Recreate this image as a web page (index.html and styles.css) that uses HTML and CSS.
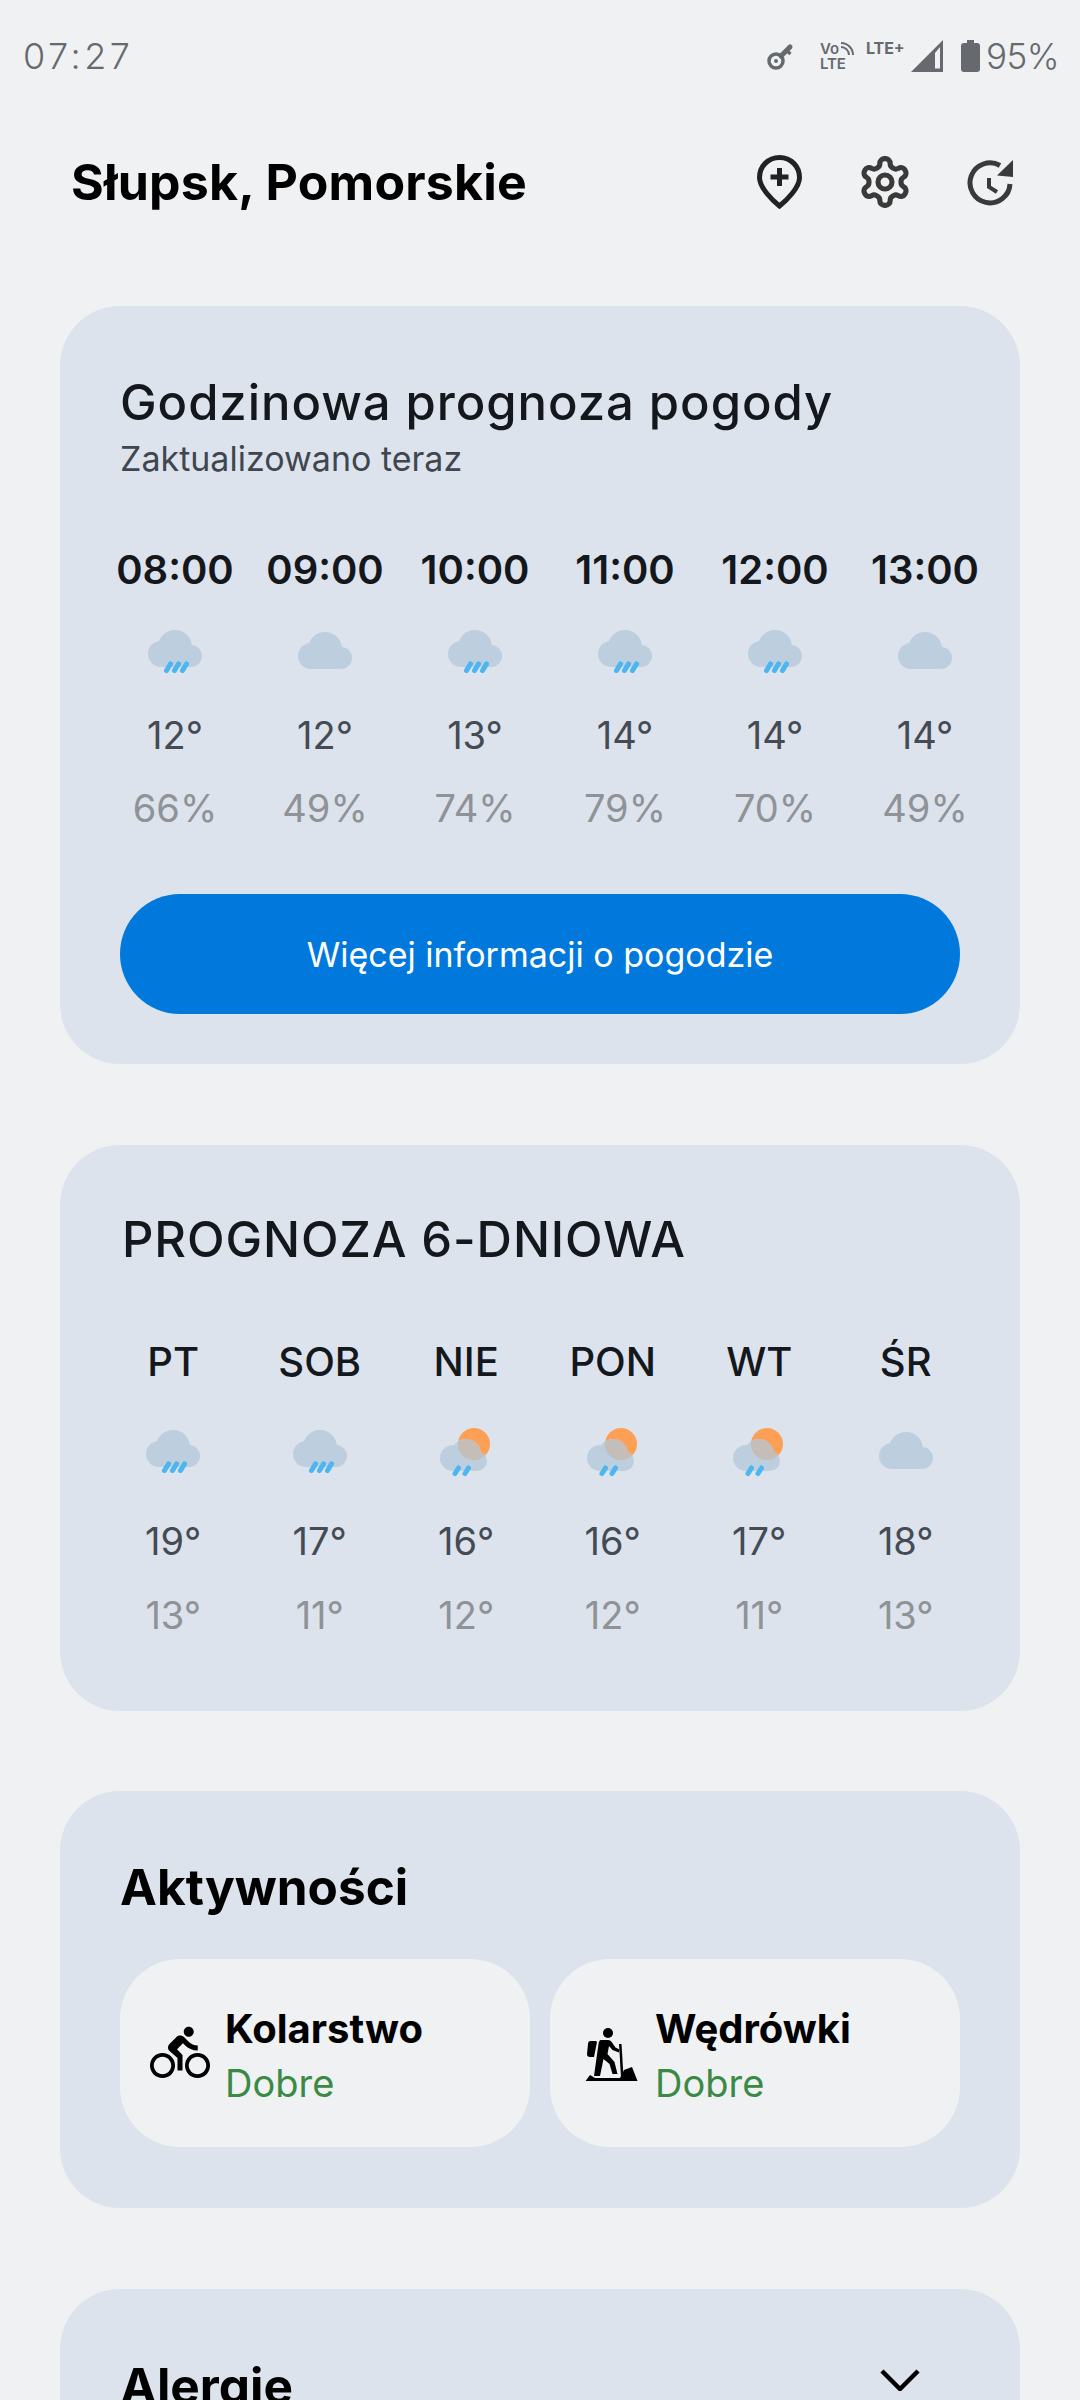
FILE: index.html
```html
<!DOCTYPE html>
<html lang="pl">
<head>
<meta charset="utf-8">
<title>Pogoda</title>
<link rel="stylesheet" href="styles.css">
</head>
<body>
<svg class="defs" width="0" height="0">
  <defs>
    <g id="cloud"><circle cx="27" cy="17" r="17"/><circle cx="13" cy="24" r="13"/><circle cx="43" cy="26" r="11"/><rect x="13" y="20" width="30" height="17"/></g>
    <g id="rain3" class="drops"><path d="M18.500 40.500l4-6.500M26.500 40.500l4-6.500M34.500 40.500l4-6.500"/></g>
    <g id="lobes"><circle cx="27" cy="24" r="15"/><circle cx="14" cy="28" r="13"/><circle cx="38" cy="31" r="10"/><rect x="14" y="24" width="24" height="17"/></g>
    <clipPath id="sunclip"><circle cx="35" cy="14" r="16"/></clipPath>
    <symbol id="i-rain" viewBox="0 0 54 44" overflow="visible"><use href="#cloud" class="cl"/><use href="#rain3"/></symbol>
    <symbol id="i-cloud" viewBox="0 0 54 44" overflow="visible"><use href="#cloud" class="cl" y="2"/></symbol>
    <symbol id="i-sun" viewBox="0 0 54 44" overflow="visible">
      <circle cx="35" cy="14" r="16" class="sun"/>
      <use href="#lobes" class="cl"/>
      <g clip-path="url(#sunclip)"><use href="#lobes" class="ov"/></g>
      <g class="drops"><path d="M16 43.500l3.500-5.500M26 43.500l3.500-5.500"/></g>
    </symbol>
  </defs>
</svg>

<div class="status">
  <span class="clock">07:27</span>
  <div class="status-right">
    <svg class="st-key" viewBox="0 0 28 28"><circle cx="9" cy="19" r="7" class="st-line"/><circle cx="9" cy="19" r="2" class="st-fill"/><path class="st-shaft" d="M14 14L23 5"/><path class="st-line" d="M20 9l3.500 3"/></svg>
    <div class="volte"><span class="vo">Vo<svg class="vo-w" viewBox="0 0 14 14"><path d="M1 5a8 8 0 0 1 8 8M1 1a12 12 0 0 1 12 12" class="st-thin"/></svg></span><span>LTE</span></div>
    <span class="lte">LTE+</span>
    <svg class="st-sig" viewBox="0 0 32 32"><path d="M32 0V32H0Z" class="st-fill"/><path d="M24 13V28.500H29V7Z" class="st-bg"/></svg>
    <svg class="st-bat" viewBox="0 0 19 32"><path d="M6 0h7v3h3a3 3 0 0 1 3 3v23a3 3 0 0 1-3 3H3a3 3 0 0 1-3-3V6a3 3 0 0 1 3-3h3z" class="st-fill"/></svg>
    <span class="pct">95%</span>
  </div>
</div>

<header class="head">
  <h1 class="place">Słupsk, Pomorskie</h1>
  <svg class="h-pin" viewBox="0 0 45 54"><path class="h-line" d="M22.500 2.500C11 2.500 2.500 11.500 2.500 22.500C2.500 32.500 15 45 22.500 51C30 45 42.500 32.500 42.500 22.500C42.500 11.500 34 2.500 22.500 2.500Z"/><path class="h-line" d="M22.500 13v18M13.500 22h18"/></svg>
  <svg class="h-gear" viewBox="0 0 24 24"><path class="h-gear-l" d="M12.220 2h-.44a2 2 0 0 0-2 2v.18a2 2 0 0 1-1 1.730l-.43.250a2 2 0 0 1-2 0l-.15-.08a2 2 0 0 0-2.730.730l-.22.380a2 2 0 0 0 .730 2.730l.15.100a2 2 0 0 1 1 1.720v.510a2 2 0 0 1-1 1.740l-.15.090a2 2 0 0 0-.730 2.730l.22.380a2 2 0 0 0 2.730.730l.15-.08a2 2 0 0 1 2 0l.43.250a2 2 0 0 1 1 1.730V20a2 2 0 0 0 2 2h.44a2 2 0 0 0 2-2v-.18a2 2 0 0 1 1-1.730l.43-.25a2 2 0 0 1 2 0l.15.08a2 2 0 0 0 2.730-.73l.22-.39a2 2 0 0 0-.73-2.730l-.15-.08a2 2 0 0 1-1-1.740v-.5a2 2 0 0 1 1-1.740l.15-.09a2 2 0 0 0 .73-2.730l-.22-.38a2 2 0 0 0-2.730-.73l-.15.08a2 2 0 0 1-2 0l-.43-.25a2 2 0 0 1-1-1.730V4a2 2 0 0 0-2-2z"/><circle class="h-gear-l" cx="12" cy="12" r="3"/></svg>
  <svg class="h-hist" viewBox="0 0 48 48"><path class="h-line2" d="M43 26A20 20 0 1 1 33 7.500"/><path class="h-fill" d="M46 2V19L30 17.500Z"/><path class="h-thin" d="M22 20v9l8 5"/></svg>
</header>

<section class="card card-hours">
  <h2 class="card-title">Godzinowa prognoza pogody</h2>
  <p class="updated">Zaktualizowano teraz</p>
  <div class="hours">
    <div class="col"><span class="time">08:00</span><svg class="wx"><use href="#i-rain"/></svg><span class="temp">12°</span><span class="mute">66%</span></div>
    <div class="col"><span class="time">09:00</span><svg class="wx"><use href="#i-cloud"/></svg><span class="temp">12°</span><span class="mute">49%</span></div>
    <div class="col"><span class="time">10:00</span><svg class="wx"><use href="#i-rain"/></svg><span class="temp">13°</span><span class="mute">74%</span></div>
    <div class="col"><span class="time">11:00</span><svg class="wx"><use href="#i-rain"/></svg><span class="temp">14°</span><span class="mute">79%</span></div>
    <div class="col"><span class="time">12:00</span><svg class="wx"><use href="#i-rain"/></svg><span class="temp">14°</span><span class="mute">70%</span></div>
    <div class="col"><span class="time">13:00</span><svg class="wx"><use href="#i-cloud"/></svg><span class="temp">14°</span><span class="mute">49%</span></div>
  </div>
  <div class="more">Więcej informacji o pogodzie</div>
</section>

<section class="card card-days">
  <h2 class="card-title caps">PROGNOZA 6-DNIOWA</h2>
  <div class="days">
    <div class="col"><span class="day">PT</span><svg class="wx"><use href="#i-rain"/></svg><span class="temp">19°</span><span class="mute">13°</span></div>
    <div class="col"><span class="day">SOB</span><svg class="wx"><use href="#i-rain"/></svg><span class="temp">17°</span><span class="mute">11°</span></div>
    <div class="col"><span class="day">NIE</span><svg class="wx"><use href="#i-sun"/></svg><span class="temp">16°</span><span class="mute">12°</span></div>
    <div class="col"><span class="day">PON</span><svg class="wx"><use href="#i-sun"/></svg><span class="temp">16°</span><span class="mute">12°</span></div>
    <div class="col"><span class="day">WT</span><svg class="wx"><use href="#i-sun"/></svg><span class="temp">17°</span><span class="mute">11°</span></div>
    <div class="col"><span class="day">ŚR</span><svg class="wx"><use href="#i-cloud"/></svg><span class="temp">18°</span><span class="mute">13°</span></div>
  </div>
</section>

<section class="card card-act">
  <h2 class="card-title strong">Aktywności</h2>
  <div class="pills">
    <div class="pill">
      <svg class="act-ic" viewBox="0 0 24 24"><path d="M15.500 5.500c1.100 0 2-.9 2-2s-.9-2-2-2-2 .9-2 2 .9 2 2 2zM5 12c-2.800 0-5 2.200-5 5s2.200 5 5 5 5-2.200 5-5-2.200-5-5-5zm0 8.500c-1.900 0-3.500-1.600-3.500-3.500s1.600-3.500 3.500-3.500 3.500 1.600 3.500 3.500-1.600 3.500-3.500 3.500zm5.800-10l2.400-2.400.8.800c1.300 1.300 3 2.100 5.100 2.100V9c-1.500 0-2.700-.6-3.600-1.500l-1.900-1.900c-.5-.4-1-.6-1.600-.6s-1.100.2-1.400.6L7.800 8.400c-.4.4-.6.9-.6 1.400 0 .6.2 1.100.6 1.400L11 14v5h2v-6.200l-2.200-2.300zM19 12c-2.800 0-5 2.200-5 5s2.200 5 5 5 5-2.200 5-5-2.200-5-5-5zm0 8.500c-1.900 0-3.500-1.600-3.500-3.500s1.600-3.500 3.500-3.500 3.500 1.600 3.500 3.500-1.600 3.500-3.500 3.500z"/></svg>
      <div class="act-text"><span class="act-name">Kolarstwo</span><span class="act-val">Dobre</span></div>
    </div>
    <div class="pill">
      <svg class="act-ic" viewBox="0 0 60 60"><circle cx="28" cy="10" r="5"/><path d="M10 18h6l1 1-3 15h-4a3 3 0 0 1-3-3l1-10a3 3 0 0 1 2-3z"/><path d="M21 17h7c2 0 3 1 4 2.500l3.500 5 4 2-.7 3-6.300-2.500-3.500-4-1.500 8 7 8 3 12h-5l-3-10-6-5-3.500 17H14l4.500-32c.2-2 1-4 2.500-4z"/><path d="M39 21h2.500l2 33H41z"/><path d="M5.500 58L10 52l5 3h25l4-8 8-3 5.500 14z"/></svg>
      <div class="act-text"><span class="act-name">Wędrówki</span><span class="act-val">Dobre</span></div>
    </div>
  </div>
</section>

<section class="card card-all">
  <h2 class="card-title strong">Alergie</h2>
  <svg class="chev" viewBox="0 0 40 22"><path d="M2 2l18 18L38 2"/></svg>
</section>
</body>
</html>
```
FILE: styles.css
```css
* { box-sizing: border-box; }
html, body { margin: 0; padding: 0; }
body {
  width: 1080px;
  height: 2400px;
  overflow: hidden;
  background: #f0f1f3;
  font-family: Inter, "Open Sans", sans-serif;
  color: #14181d;
}
.defs { position: absolute; }
.cl { fill: #bdcfdf; }
.ov { fill: #c5bdb8; }
.sun { fill: #fd9f55; }
.drops { fill: none; stroke: #4db6f0; stroke-width: 5; stroke-linecap: round; }

.status {
  height: 112px;
  display: flex;
  align-items: center;
  justify-content: space-between;
  padding: 0 21px 0 23px;
  color: #666a6e;
}
.clock { font-size: 36px; font-weight: 300; letter-spacing: 3.500px; }
.pct { font-size: 35px; font-weight: 300; letter-spacing: -.5px; }
.status-right { display: flex; align-items: center; }
.st-key { width: 28px; height: 28px; margin-right: 25px; }
.st-line { fill: none; stroke: #666a6e; stroke-width: 3.500; }
.st-shaft { fill: none; stroke: #666a6e; stroke-width: 5; stroke-linecap: round; }
.st-thin { fill: none; stroke: #666a6e; stroke-width: 2; }
.st-fill { fill: #666a6e; }
.st-bg { fill: #f0f1f3; }
.volte { display: flex; flex-direction: column; width: 35px; margin-right: 11px; font-size: 15px; line-height: 15px; font-weight: 600; }
.vo { display: flex; align-items: center; gap: 1px; }
.vo-w { width: 14px; height: 14px; }
.lte { width: 39px; font-size: 16px; line-height: 16px; font-weight: 700; margin: -17px 6px 0 0; white-space: nowrap; }
.st-sig { width: 32px; height: 32px; margin-right: 18px; }
.st-bat { width: 19px; height: 32px; margin-right: 6px; }

.head {
  height: 140px;
  margin-bottom: 54px;
  display: flex;
  align-items: center;
  padding-left: 71px;
}
.place { margin: 0; flex: 1; font-size: 50px; letter-spacing: .2px; line-height: 60px; font-weight: 700; color: #000; }
.h-pin { width: 45px; height: 54px; margin-right: 55px; }
.h-gear { width: 56px; height: 56px; margin-right: 54px; }
.h-hist { width: 48px; height: 48px; margin-right: 65px; }
.h-line { fill: none; stroke: #222; stroke-width: 5; }
.h-line2 { fill: none; stroke: #3a3a3a; stroke-width: 5; }
.h-thin { fill: none; stroke: #3a3a3a; stroke-width: 4; }
.h-fill { fill: #3a3a3a; }
.h-gear-l { fill: none; stroke: #3a3a3a; stroke-width: 2.200; }

.card {
  margin: 0 60px 81px;
  background: #dce3ec;
  border-radius: 60px;
  padding: 0 60px;
}
.card-title { margin: 0; font-size: 49px; letter-spacing: .95px; line-height: 60px; font-weight: 500; color: #14181d; }
.caps { padding-left: 2px; letter-spacing: .9px; }
.strong { font-weight: 700; color: #000; font-size: 49.500px; letter-spacing: 0; }

.card-hours { padding-top: 67px; height: 758px; }
.updated { margin: 4px 0 0; font-size: 34px; line-height: 44px; color: #3f4650; font-weight: 400; }
.hours { display: grid; grid-template-columns: repeat(6, 150px); margin: 64px -20px 0; }
.col { display: flex; flex-direction: column; align-items: center; }
.time { font-size: 40px; line-height: 50px; font-weight: 600; }
.day { font-size: 40px; line-height: 50px; font-weight: 500; }
.wx { display: block; width: 54px; height: 44px; margin-top: 35px; overflow: visible; }
.temp { margin-top: 36px; font-size: 38px; line-height: 50px; color: #444b55; }
.mute { margin-top: 23px; font-size: 38px; line-height: 50px; color: #8f9296; }
.more {
  margin-top: 61px;
  height: 120px;
  border-radius: 60px;
  background: #0078dc;
  color: #fff;
  font-size: 34px;
  display: flex;
  align-items: center;
  justify-content: center;
}

.card-days { padding-top: 65px; height: 566px; margin-bottom: 80px; }
.days { display: grid; grid-template-columns: repeat(6, 146.500px); margin: 67px 0 0 -20px; }
.days .wx { margin-top: 43px; }
.days .temp { margin-top: 42px; }
.days .mute { margin-top: 24px; }

.card-act { padding-top: 66px; height: 417px; }
.pills { display: grid; grid-template-columns: 410px 410px; gap: 20px; margin-top: 42px; }
.pill {
  height: 188px;
  border-radius: 60px;
  background: #f0f1f3;
  display: flex;
  align-items: center;
  padding-left: 30px;
  gap: 16px;
}
.act-ic { width: 60px; height: 60px; flex: none; overflow: visible; fill: #000; }
.act-text { display: flex; flex-direction: column; padding-top: 5px; margin-left: -1px; }
.act-name { font-size: 40px; line-height: 54px; font-weight: 700; color: #000; }
.act-val { font-size: 38px; line-height: 54px; color: #3a8a45; }

.card-all { padding-top: 67px; height: 300px; display: flex; justify-content: space-between; align-items: flex-start; }
.chev { width: 40px; height: 22px; margin: 13px 40px 0 0; }
.chev path { fill: none; stroke: #000; stroke-width: 4.500; }
```
